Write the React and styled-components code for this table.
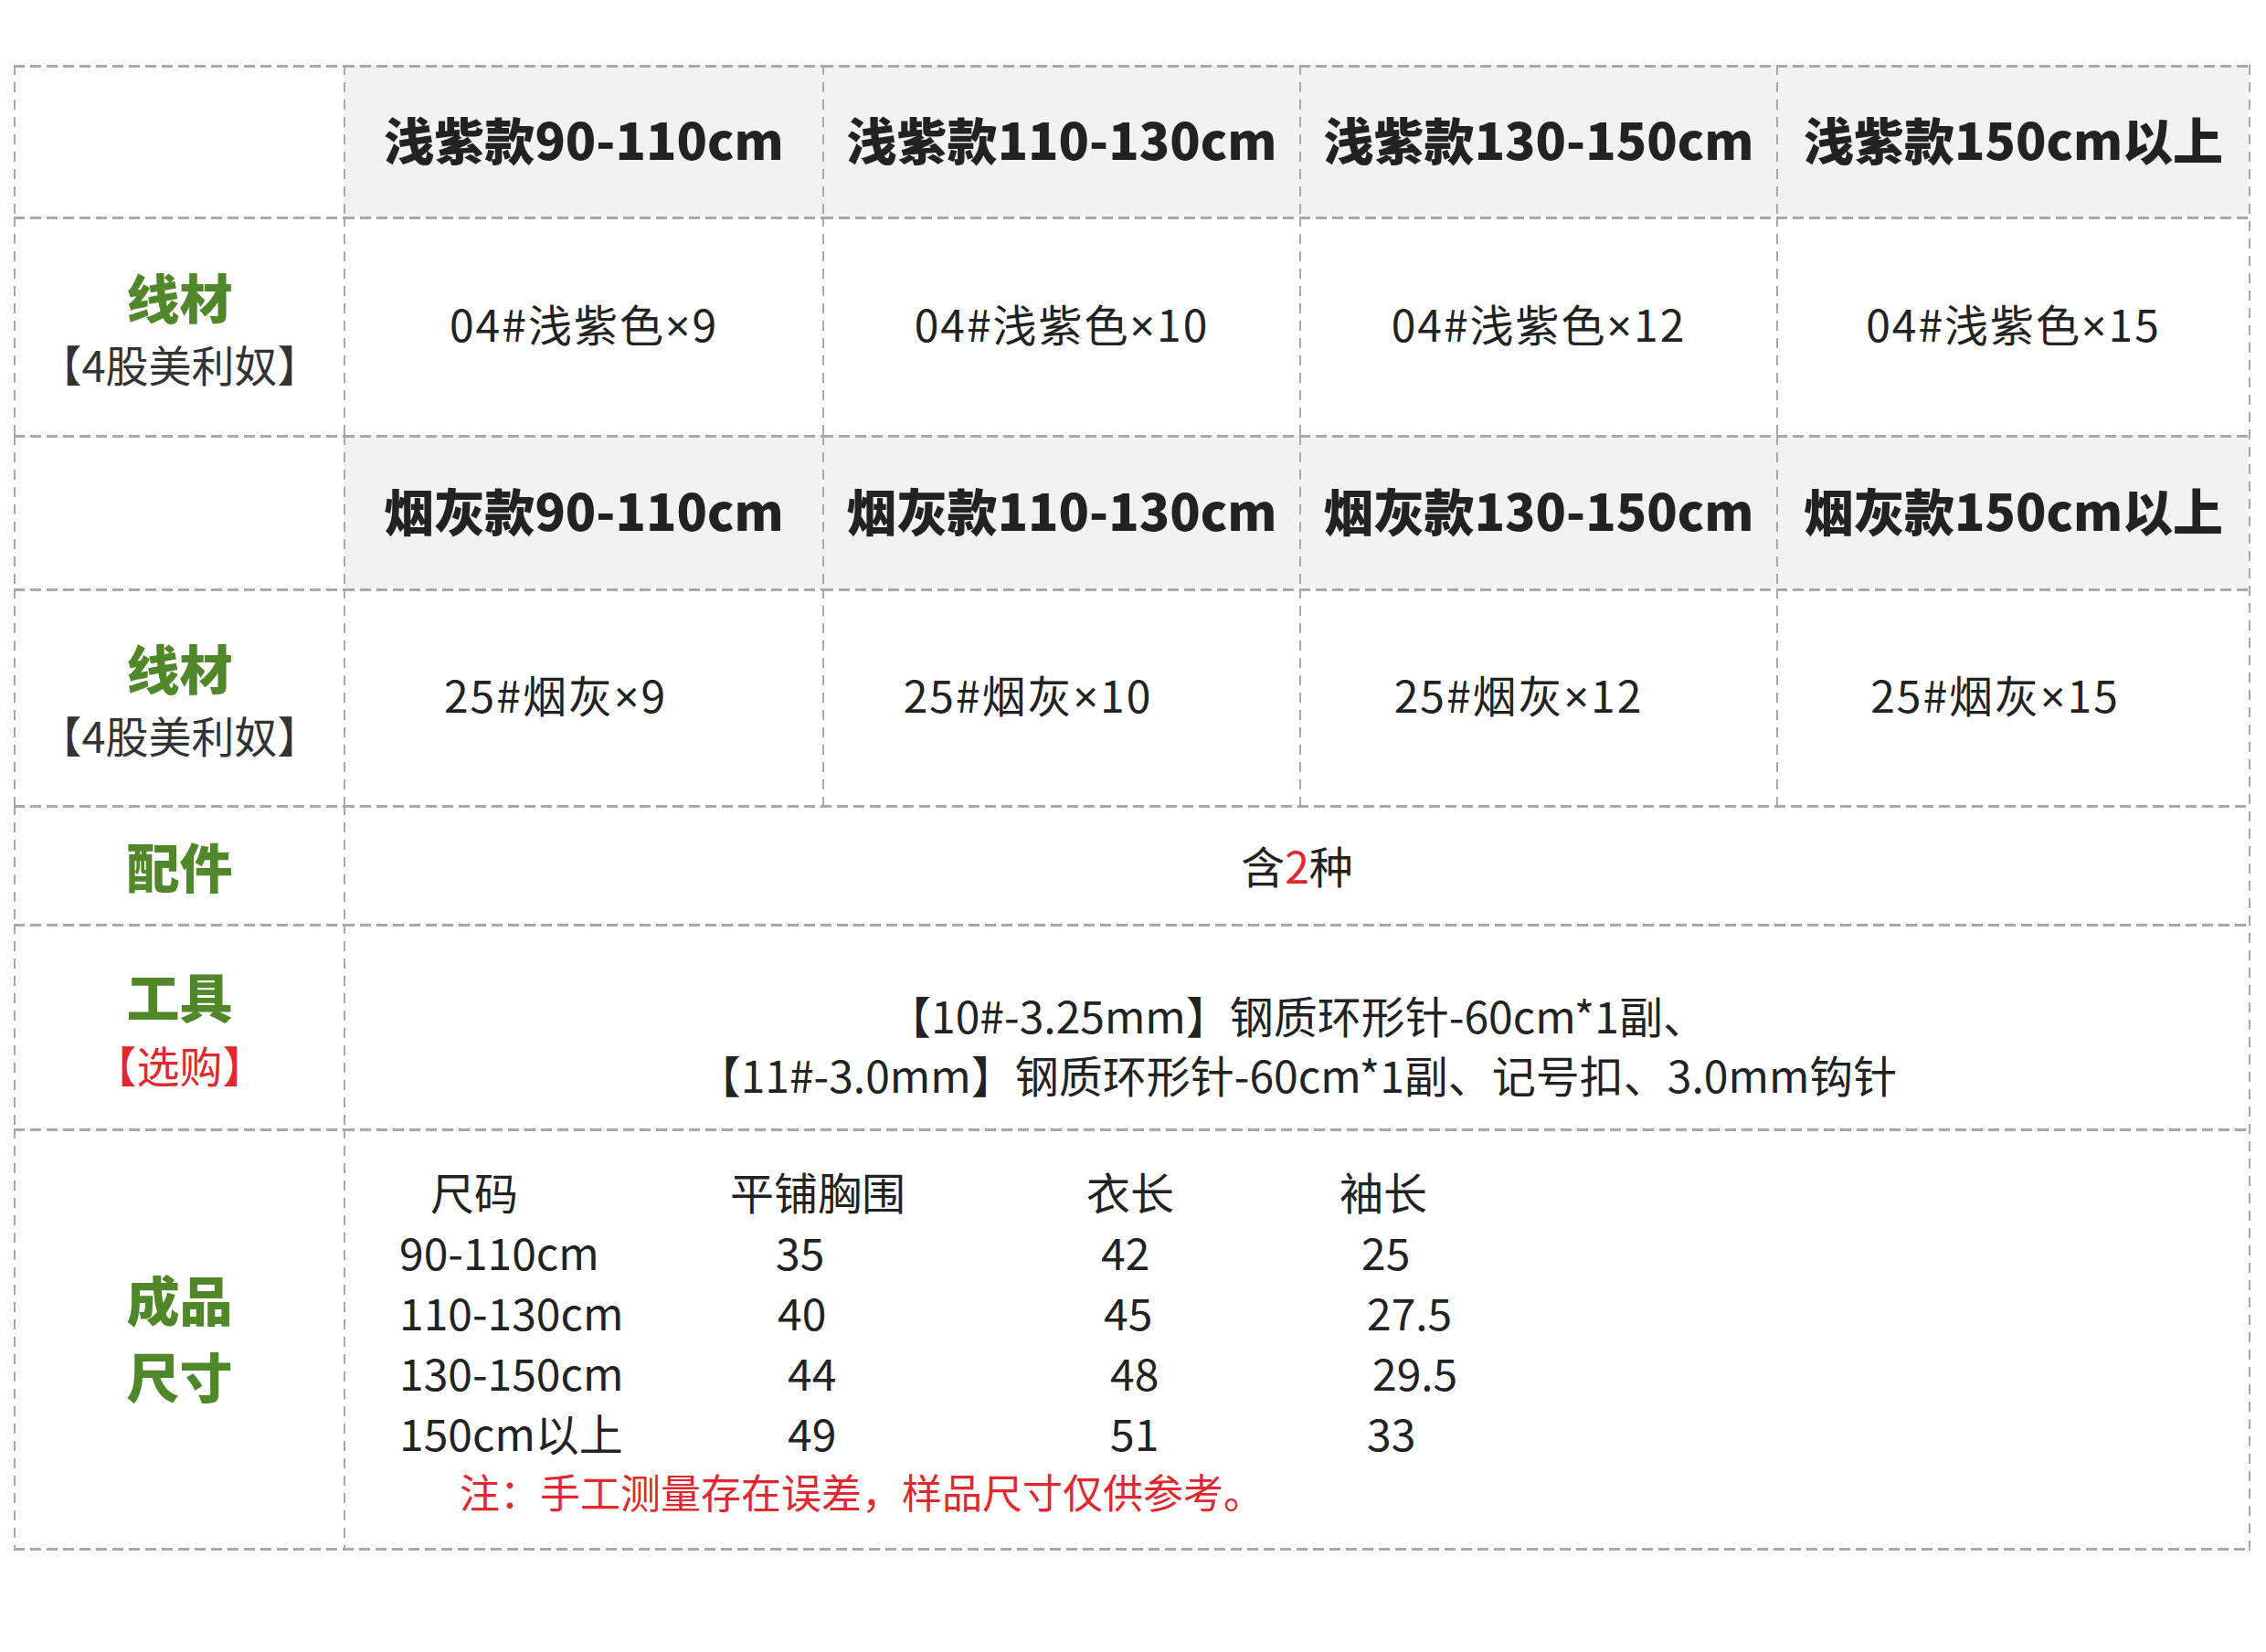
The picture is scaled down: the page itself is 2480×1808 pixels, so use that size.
import React from 'react';
import styled, { createGlobalStyle, css } from 'styled-components';

const LINE = '#a9a9a9';
const GREEN = '#4f8729';
const RED = '#e0282e';
const INK = '#222';

const GlobalStyle = createGlobalStyle`
  html, body { margin: 0; padding: 0; background: #fff; }
  body {
    font-family: "Noto Sans CJK SC", "Noto Sans", sans-serif;
    color: ${INK};
  }
`;

const hDash = `repeating-linear-gradient(to right, ${LINE} 0 12px, transparent 12px 18px)`;
const vDash = `repeating-linear-gradient(to bottom, ${LINE} 0 11px, transparent 11px 19px)`;

const Page = styled.div`
  width: 2480px;
  height: 1808px;
  box-sizing: border-box;
  padding: 71px 0 0 15px;
  background: #fff;
`;

const Table = styled.div`
  display: grid;
  grid-template-columns: 361px 524px 522px 522px 517px;
  grid-template-rows: 166px 239px 168px 237px 130px 224px 459px;
  width: max-content;
  padding: 0 2px 3px 0;
  background-image: ${vDash}, ${hDash};
  background-size: 2px 100%, 100% 3px;
  background-position: right top, left bottom;
  background-repeat: no-repeat;
`;

const Cell = styled.div`
  box-sizing: border-box;
  grid-column: span ${p => p.$span || 1};
  background-color: ${p => (p.$head ? '#f2f2f2' : '#fff')};
  background-image: ${hDash}, ${vDash};
  background-size: 100% 3px, 2px 100%;
  background-position: 0 0, 0 0;
  background-repeat: no-repeat;
  padding: 3px 0 0 2px;
  display: flex;
  flex-direction: column;
  align-items: center;
  justify-content: center;
  min-width: 0;
`;

const SizeCell = styled(Cell)`
  align-items: flex-start;
  justify-content: flex-start;
  padding: 35px 0 0 61px;
`;

const HeadText = styled.div`
  font-size: 55px;
  font-weight: 900;
  color: ${INK};
  white-space: nowrap;
  line-height: 1.2;
  margin-bottom: 9px;
`;

const Label = styled.div`
  font-size: 58px;
  font-weight: 900;
  color: ${GREEN};
  line-height: ${p => p.$lh || '70px'};
  white-space: nowrap;
  ${p => p.$lift && css`margin-bottom: ${p.$lift}px;`}
`;

const SubLabel = styled.div`
  font-size: 47px;
  color: ${p => (p.$red ? RED : '#333')};
  line-height: 61px;
  margin-top: ${p => p.$gap || 0}px;
  white-space: nowrap;
`;

const Value = styled.div`
  font-size: 48px;
  color: ${INK};
  line-height: 1.3;
  white-space: nowrap;
  letter-spacing: ${p => (p.$spaced ? '2px' : '0')};
  margin-bottom: ${p => (p.$lift ? p.$lift : 0)}px;
  margin-right: ${p => (p.$shift ? -2 * p.$shift : 0)}px;
`;

const Times = styled.span`
  font-family: "Noto Sans", "DejaVu Sans", sans-serif;
`;

const Accent = styled.span`
  color: ${RED};
`;

const ToolLines = styled.div`
  font-size: 48px;
  line-height: 65px;
  color: ${INK};
  text-align: center;
  margin-top: ${p => p.$drop || 0}px;
  white-space: nowrap;
`;

const SizeGrid = styled.div`
  display: grid;
  grid-template-columns: 362px 390px 277px 220px;
  font-size: 48px;
  line-height: 66px;
  color: ${INK};
`;

const SizeItem = styled.span`
  padding-left: ${p => p.$indent || 0}px;
  white-space: nowrap;
`;

const Note = styled.div`
  grid-column: 1 / -1;
  padding-left: 66px;
  font-size: 44px;
  line-height: 64px;
  color: ${RED};
  white-space: nowrap;
`;

const sizes = ['90-110cm', '110-130cm', '130-150cm', '150cm以上'];

const purpleRow = [
  ['04#浅紫色', '9'],
  ['04#浅紫色', '10'],
  ['04#浅紫色', '12'],
  ['04#浅紫色', '15'],
];
const greyRow = [
  ['25#烟灰', '9'],
  ['25#烟灰', '10'],
  ['25#烟灰', '12'],
  ['25#烟灰', '15'],
];
const greyShift = [-31, -37, -22, -20];

const sizeHeader = [
  { t: '尺码', i: 34 },
  { t: '平铺胸围', i: 0 },
  { t: '衣长', i: 0 },
  { t: '袖长', i: 0 },
];

const sizeRows = [
  [{ t: '90-110cm', i: 0 }, { t: '35', i: 50 }, { t: '42', i: 16 }, { t: '25', i: 24 }],
  [{ t: '110-130cm', i: 0 }, { t: '40', i: 52 }, { t: '45', i: 19 }, { t: '27.5', i: 30 }],
  [{ t: '130-150cm', i: 0 }, { t: '44', i: 63 }, { t: '48', i: 26 }, { t: '29.5', i: 36 }],
  [{ t: '150cm以上', i: 0 }, { t: '49', i: 63 }, { t: '51', i: 26 }, { t: '33', i: 30 }],
];

function YarnLabel() {
  return (
    <Cell>
      <Label>线材</Label>
      <SubLabel $gap={8}>【4股美利奴】</SubLabel>
    </Cell>
  );
}

function Amount({ name, count, shift }) {
  return (
    <Cell>
      <Value $spaced $shift={shift} $lift={6}>
        {name}
        <Times>×</Times>
        {count}
      </Value>
    </Cell>
  );
}

export default function App() {
  return (
    <>
      <GlobalStyle />
      <Page>
        <Table>
          <Cell />
          {sizes.map(s => (
            <Cell key={'ph' + s} $head>
              <HeadText>浅紫款{s}</HeadText>
            </Cell>
          ))}

          <YarnLabel />
          {purpleRow.map(([n, c]) => (
            <Amount key={n + c} name={n} count={c} />
          ))}

          <Cell />
          {sizes.map(s => (
            <Cell key={'gh' + s} $head>
              <HeadText>烟灰款{s}</HeadText>
            </Cell>
          ))}

          <YarnLabel />
          {greyRow.map(([n, c], i) => (
            <Amount key={n + c} name={n} count={c} shift={greyShift[i]} />
          ))}

          <Cell>
            <Label $lift={2}>配件</Label>
          </Cell>
          <Cell $span={4}>
            <Value $lift={2}>
              含<Accent>2</Accent>种
            </Value>
          </Cell>

          <Cell>
            <Label>工具</Label>
            <SubLabel $red $gap={10}>【选购】</SubLabel>
          </Cell>
          <Cell $span={4}>
            <ToolLines $drop={36}>
              【10#-3.25mm】钢质环形针-60cm*1副、
              <br />
              【11#-3.0mm】钢质环形针-60cm*1副、记号扣、3.0mm钩针
            </ToolLines>
          </Cell>

          <Cell>
            <Label $lh="84px" $lift={0}>成品</Label>
            <Label $lh="84px" $lift={6}>尺寸</Label>
          </Cell>
          <SizeCell $span={4}>
            <SizeGrid>
              {sizeHeader.map(c => (
                <SizeItem key={c.t} $indent={c.i}>{c.t}</SizeItem>
              ))}
              {sizeRows.map((row, r) =>
                row.map((c, k) => (
                  <SizeItem key={r + '-' + k} $indent={c.i}>{c.t}</SizeItem>
                ))
              )}
              <Note>注：手工测量存在误差，样品尺寸仅供参考。</Note>
            </SizeGrid>
          </SizeCell>
        </Table>
      </Page>
    </>
  );
}
